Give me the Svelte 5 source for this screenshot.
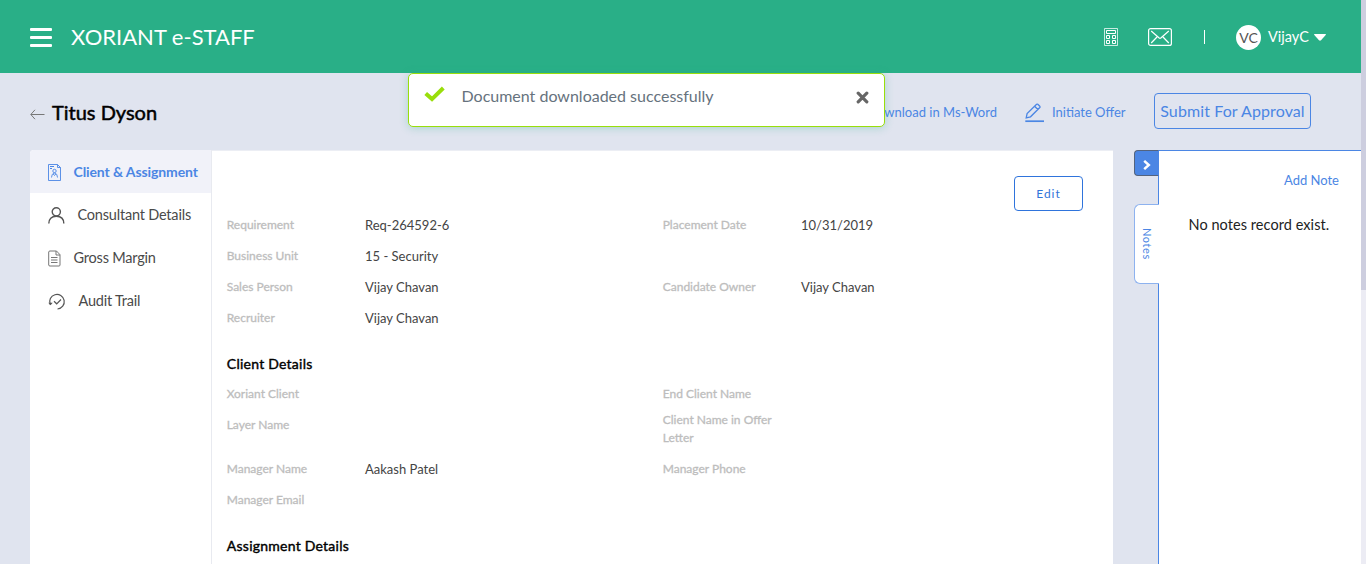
<script>
  const general = [
    ['Requirement', 'Req-264592-6', 'Placement Date', '10/31/2019'],
    ['Business Unit', '15 - Security', '', ''],
    ['Sales Person', 'Vijay Chavan', 'Candidate Owner', 'Vijay Chavan'],
    ['Recruiter', 'Vijay Chavan', '', '']
  ];
  const client = [
    ['Xoriant Client', '', 'End Client Name', ''],
    ['Layer Name', '', 'Client Name in Offer Letter', ''],
    ['Manager Name', 'Aakash Patel', 'Manager Phone', ''],
    ['Manager Email', '', '', '']
  ];
</script>

{#snippet rows(items)}
  <dl class="rows">
    {#each items as [label, value, label2, value2]}
      <div class="row" class:tall={label2.length > 20}>
        <dt>{label}</dt>
        <dd>{value}</dd>
        <dt class="second">{label2}</dt>
        <dd>{value2}</dd>
      </div>
    {/each}
  </dl>
{/snippet}

<div class="window">
  <div class="app">
    <header>
      <button class="burger" aria-label="Menu"><i></i><i></i><i></i></button>
      <span class="brand">XORIANT e-STAFF</span>
      <svg class="calc" width="14" height="18" viewBox="0 0 14 18" fill="none" stroke="#fff" stroke-width="1">
        <path d="M.5.5h13v17H.5z" stroke-opacity=".75" />
        <path d="M2.500 2.500h9v3h-9zM2.500 7.500h3v3h-3zM8.500 7.500h3v3h-3zM2.500 12.500h3v3h-3zM8.500 12.500h3v3h-3z" />
      </svg>
      <svg class="mail" width="24" height="18" viewBox="0 0 24 18" fill="none" stroke="#fff" stroke-width="1.200">
        <rect x=".6" y=".6" width="22.800" height="16.800" rx="2" />
        <path d="M3.200 3l8 7q.8.6 1.600 0l8-7M3.200 15l5.800-6M20.800 15L15 9" />
      </svg>
      <span class="bar"></span>
      <span class="avatar">VC</span>
      <span class="user">VijayC</span>
      <svg class="caret" width="12" height="7" viewBox="0 0 12 7"><path d="M.5 0h11q.7.300.200 1L7 6.300q-1 .9-2 0L.3 1Q-.2.300.5 0z" fill="#fff" /></svg>
    </header>

    <div class="toolbar">
      <svg class="back" width="15" height="11" viewBox="0 0 15 11" fill="none" stroke="#777" stroke-width="1"><path d="M5 .8L.8 5.500 5 10.200M1 5.500h13.500" /></svg>
      <h1>Titus Dyson</h1>
      <span class="word">Download in Ms-Word</span>
      <svg class="pen" width="20" height="20" viewBox="0 0 20 20" fill="none" stroke="#4b86e4" stroke-width="1.300">
        <path d="M1.200 14.800l.9-4.300L11.600 1.300q.6-.5 1.200 0l2 2q.5.6 0 1.200L5.500 13.800zM9.600 3.200l3.300 3.300" />
        <path d="M.3 18.200h18.700" stroke-width="1.700" />
      </svg>
      <span class="offer">Initiate Offer</span>
      <button class="submit">Submit For Approval</button>
    </div>

    <main>
      <nav>
        <a class="active" href="#client">
          <svg width="13" height="17" viewBox="0 0 13 17" fill="none" stroke="#4b86e4" stroke-width=".9">
            <path d="M.5.5h9l3 3v13H.5zM9.500.5v3h3" />
            <path d="M2 2.500h4M2 4.500h2" stroke-width="1.200" />
            <circle cx="6.500" cy="7" r="1.700" /><path d="M3.500 13.500q0-4 3-4.500 3 .5 3 4.500M5.200 10l1.300 1.500L7.800 10" />
          </svg><span>Client &amp; Assignment</span>
        </a>
        <a href="#consultant">
          <svg width="17" height="17" viewBox="0 0 17 17" fill="none" stroke="#555" stroke-width="1.400">
            <circle cx="8.300" cy="4.800" r="4.100" /><path d="M.8 16.500c0-4.300 2.600-7.300 7.500-7.300s7.500 3 7.500 7.300" />
          </svg><span>Consultant Details</span>
        </a>
        <a href="#margin">
          <svg width="13" height="17" viewBox="0 0 13 17" fill="none" stroke="#777" stroke-width="1">
            <path d="M2 1h6.500l3.500 3.700V15q0 1-1 1H2q-1.300 0-1.300-1V2Q.7 1 2 1zM8 1v4h4M3 7.500h6.500M3 10h6.500M3 12.500h6.500" />
          </svg><span>Gross Margin</span>
        </a>
        <a href="#audit">
          <svg width="18" height="17" viewBox="0 0 18 17" fill="none" stroke="#555" stroke-width="1.200">
            <path d="M2.200 11.500A7.300 7.300 0 1 1 9.500 16" /><path d="M.3 9.800h4.400l-2.200 2.400z" fill="#555" stroke="none" /><path d="M6 8.200l2.700 2.600L13 6.500" />
          </svg><span>Audit Trail</span>
        </a>
      </nav>

      <section class="content">
        <button class="edit">Edit</button>
        {@render rows(general)}
        <h2>Client Details</h2>
        {@render rows(client)}
        <h2>Assignment Details</h2>
      </section>

      <div class="tabs">
        <button class="collapse" aria-label="Collapse">
          <svg width="8" height="10" viewBox="0 0 8 10" fill="none" stroke="#fff" stroke-width="2.500"><path d="M1.200.9L5.800 5 1.200 9.100" /></svg>
        </button>
        <div class="tab"><span>Notes</span></div>
      </div>
      <aside>
        <span class="add">Add Note</span>
        <p>No notes record exist.</p>
      </aside>
    </main>

    <div class="toast">
      <svg class="check" width="21" height="16" viewBox="0 0 21 16" fill="none" stroke="#99de0b" stroke-width="4"><path d="M1.700 7.500l6.300 5.600L19.300 2" /></svg>
      <span>Document downloaded successfully</span>
      <svg class="close" width="13" height="13" viewBox="0 0 13 13" stroke="#666" stroke-width="3.200" stroke-linecap="round"><path d="M2.200 2.200l8.600 8.600M10.800 2.200l-8.600 8.600" /></svg>
    </div>
  </div>
  <div class="scroll"><i></i></div>
</div>

<style>
  :global(body) { margin: 0; overflow: hidden; }
  .window { display: flex; width: 1366px; height: 564px; overflow: hidden; font-family: Lato, sans-serif; white-space: nowrap; }
  .app { position: relative; width: 1361px; background: #e0e4ef; }
  button { font-family: inherit; padding: 0; margin: 0; box-sizing: border-box; }
  svg { flex: none; display: block; }
  .scroll { width: 5px; background: #ececf4; }
  .scroll i { display: block; height: 290px; background: #cdcedf; }

  header { height: 73px; box-sizing: border-box; padding: 1px 35px 0 30px; display: flex; align-items: center; background: #29af87; color: #fff; }
  .burger { width: 22px; height: 19px; margin-top: 1px; display: flex; flex-direction: column; justify-content: space-between; border: 0; background: none; }
  .burger i { width: 22px; height: 3px; background: #fff; border-radius: 1px; }
  .brand { margin-left: 19px; padding-bottom: 2px; font-size: 22px; }
  .calc { margin-left: auto; }
  .mail { margin-left: 30px; }
  .bar { width: 1px; height: 14px; margin-left: 32px; background: #fff; }
  .avatar { width: 25px; height: 25px; margin-left: 31px; border-radius: 50%; background: #fff; color: #555; font-size: 14px; line-height: 25px; text-align: center; }
  .user { width: 41px; margin-left: 7px; padding-bottom: 1px; font-size: 14.500px; }
  .caret { margin-left: 5px; }

  .toolbar { height: 77px; display: flex; align-items: center; padding: 0 50px 0 30px; box-sizing: border-box; color: #4b86e4; font-size: 13px; }
  .back { margin-top: 6px; }
  h1 { margin: 1px 0 0 7px; font-size: 20px; font-weight: 400; color: #000; -webkit-text-stroke: .5px #000; }
  .word { margin: 0 0 0 auto; }
  .pen { margin: 2px 0 0 28px; }
  .offer { margin: 0 0 0 7px; width: 75px; }
  .submit { width: 157px; height: 36px; margin: -1px 0 0 27px; padding-bottom: 2px; border: 1px solid #4b86e4; border-radius: 4px; background: transparent; color: #4b86e4; font-size: 16px; letter-spacing: .1px; }

  main { display: flex; height: 414px; padding-left: 30px; }
  nav { width: 181px; border-right: 1px solid #e8eaf0; background: #fff; border-radius: 4px 0 0 0; overflow: hidden; }
  nav a { height: 43px; padding-left: 18px; display: flex; align-items: center; gap: 12.500px; color: #4a4a4a; font-size: 14.500px; letter-spacing: -.2px; text-decoration: none; }
  nav a svg { margin-top: 1px; }
  nav a.active { background: #f1f2f9; color: #4b86e4; font-size: 14px; font-weight: 700; letter-spacing: -.1px; }
  nav span { padding-bottom: 1px; }

  .content { width: 901px; box-sizing: border-box; padding: 26px 30px 0 15px; background: #fff; border-top: 1px solid #eceef4; }
  .edit { display: block; width: 69px; height: 35px; margin: -1px 0 -1px auto; border: 1px solid #2f74dc; border-radius: 4px; background: #fff; color: #3274d9; font-size: 12px; letter-spacing: 1px; }
  .rows { margin: 0; }
  .row { display: grid; grid-template-columns: 138px 298px 138px 1fr; height: 31px; line-height: 31px; }
  .tall { height: 44px; }
  dt { margin-left: -.3px; line-height: 29px; color: #bdbdbd; font-size: 12px; -webkit-text-stroke: .3px #bdbdbd; }
  dd { margin: 0; color: #444; font-size: 13px; }
  .tall .second { line-height: 18px; padding-top: 1px; width: 125px; white-space: normal; }
  h2 { margin: 0 0 0 -.2px; height: 45px; line-height: 59px; font-size: 14px; font-weight: 400; letter-spacing: .24px; color: #000; -webkit-text-stroke: .4px #000; }

  .tabs { width: 24px; margin-left: 21px; position: relative; z-index: 1; }
  .collapse { width: 25px; height: 26px; display: flex; align-items: center; justify-content: center; padding-top: 3px; border: 1px solid #53637e; border-right-color: #4b86e4; border-radius: 4px 0 0 4px; background: #4b86e4; }
  .tab { width: 25px; height: 80px; margin-top: 28px; box-sizing: border-box; border: 1px solid #8db2ef; border-right: 0; border-radius: 6px 0 0 6px; background: #fff; display: flex; align-items: center; justify-content: center; }
  .tab span { writing-mode: vertical-rl; color: #4b86e4; font-size: 11px; letter-spacing: .6px; }
  aside { flex: 1; border: solid #4b86e4; border-width: 1px 0 0 1px; background: #fff; padding: 20px 22px 0 29px; }
  .add { display: block; text-align: right; color: #4b86e4; font-size: 13px; line-height: 18px; }
  aside p { margin: 26px 0 0 .5px; color: #222; font-size: 14.500px; line-height: 20px; letter-spacing: .06px; }

  .toast { position: absolute; left: 408px; top: 73px; width: 477px; height: 54px; box-sizing: border-box; display: flex; align-items: flex-start; padding: 12px 15px 0; border: 1px solid #99de0b; border-radius: 5px; background: #fff; box-shadow: 0 1px 9px rgba(41, 175, 135, .3); }
  .toast span { margin-left: 16.500px; color: #66727d; font-size: 16px; line-height: 19px; }
  .close { margin: 5px 0 0 auto; }
</style>
